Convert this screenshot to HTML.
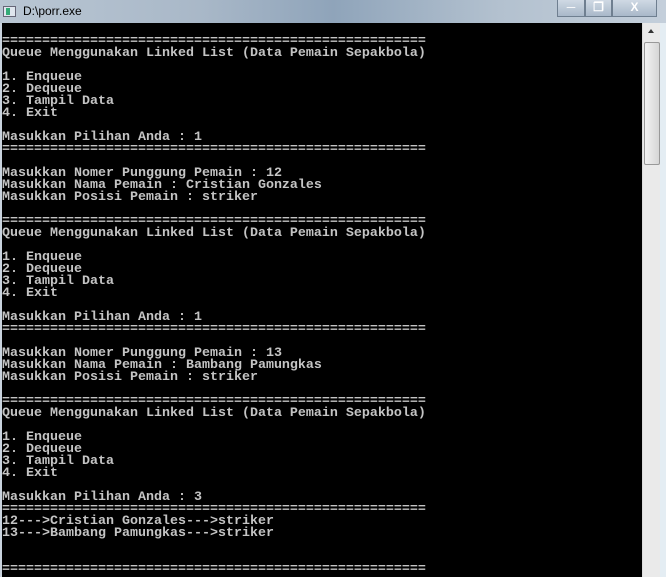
<!DOCTYPE html>
<html><head><meta charset="utf-8"><style>
html,body{margin:0;padding:0;}
body{width:666px;height:577px;overflow:hidden;position:relative;background:#c9d3de;font-family:"Liberation Sans",sans-serif;}
.title{position:absolute;left:0;top:0;width:666px;height:23px;background:linear-gradient(90deg,#b9c6d3 0%,#a9b8c8 30%,#8fa4ba 50%,#b3c1cf 75%,#c4cfdb 100%);}
.icon{position:absolute;left:3px;top:6px;width:11px;height:9px;background:#dfe6ee;border:1px solid #667;}
.icon:after{content:"";position:absolute;left:2px;top:1px;width:4px;height:7px;background:#3a7;}
.ttext{position:absolute;left:23px;top:4px;font-size:12px;color:#000;}
.btns{position:absolute;left:557px;top:0;height:17px;width:100px;}
.b{position:absolute;top:0;height:17px;border:1px solid #6f7f90;border-top:none;background:linear-gradient(#cfd9e4,#a9b8c9);box-sizing:border-box;color:#fff;font-size:12px;font-weight:bold;text-align:center;line-height:15px;}
.con{position:absolute;left:2px;top:23px;width:640px;height:554px;background:#000;}
pre{margin:0;position:absolute;left:0;top:1px;font-family:"Liberation Mono",monospace;font-size:13.33px;line-height:12px;color:#c4c4c4;font-weight:bold;letter-spacing:0;}
.sb{position:absolute;left:642px;top:23px;width:18px;height:554px;background:#eaeaea;border-left:1px solid #ddd;}
.thumb{position:absolute;left:1px;top:19px;width:14px;height:121px;border:1px solid #999;border-radius:2px;background:linear-gradient(90deg,#f2f2f2,#d6d6d6);}
.rb{position:absolute;left:660px;top:23px;width:6px;height:554px;background:#e4edf3;}
</style></head><body>
<div class="title"><div class="icon"></div><div class="ttext">D:\porr.exe</div>
<div class="btns">
<div class="b" style="left:0;width:28px;">&#9472;</div>
<div class="b" style="left:28px;width:27px;">&#10064;</div>
<div class="b" style="left:55px;width:45px;">X</div>
</div></div>
<div class="con"><pre>

=====================================================
Queue Menggunakan Linked List (Data Pemain Sepakbola)

1. Enqueue
2. Dequeue
3. Tampil Data
4. Exit

Masukkan Pilihan Anda : 1
=====================================================

Masukkan Nomer Punggung Pemain : 12
Masukkan Nama Pemain : Cristian Gonzales
Masukkan Posisi Pemain : striker

=====================================================
Queue Menggunakan Linked List (Data Pemain Sepakbola)

1. Enqueue
2. Dequeue
3. Tampil Data
4. Exit

Masukkan Pilihan Anda : 1
=====================================================

Masukkan Nomer Punggung Pemain : 13
Masukkan Nama Pemain : Bambang Pamungkas
Masukkan Posisi Pemain : striker

=====================================================
Queue Menggunakan Linked List (Data Pemain Sepakbola)

1. Enqueue
2. Dequeue
3. Tampil Data
4. Exit

Masukkan Pilihan Anda : 3
=====================================================
12---&gt;Cristian Gonzales---&gt;striker
13---&gt;Bambang Pamungkas---&gt;striker


=====================================================</pre></div>
<div class="sb"><div style="position:absolute;left:5px;top:6px;width:0;height:0;border-left:3px solid transparent;border-right:3px solid transparent;border-bottom:4px solid #333;"></div><div class="thumb"></div></div>
<div class="rb"></div>
</body></html>
